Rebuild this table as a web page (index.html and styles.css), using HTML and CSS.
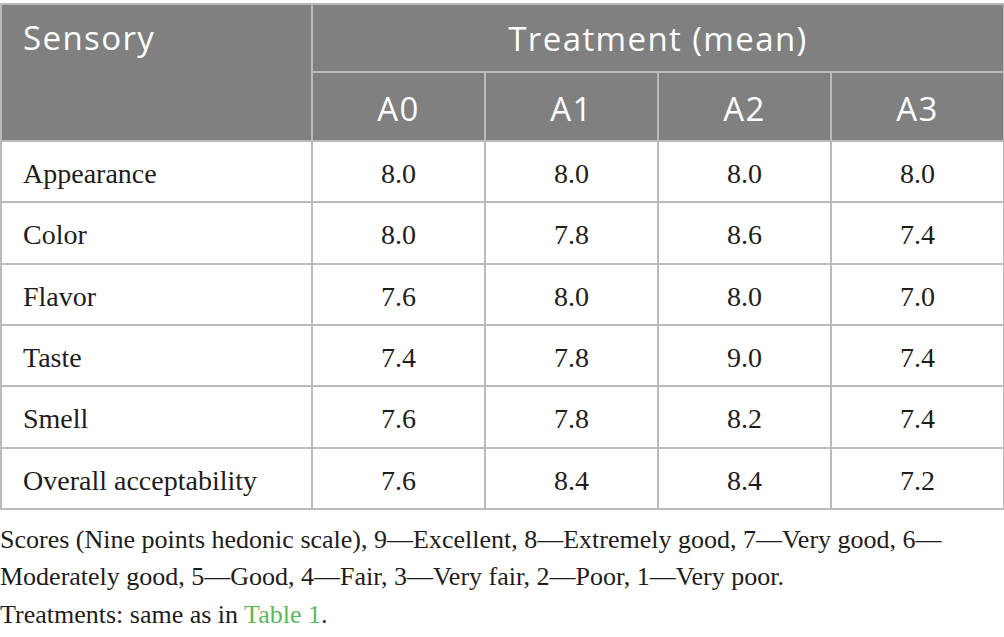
FILE: index.html
```html
<!DOCTYPE html>
<html>
<head>
<meta charset="utf-8">
<link rel="stylesheet" href="styles.css">
</head>
<body>
<div class="wrap">
<table class="data">
  <colgroup>
    <col class="c-first"><col class="c-num"><col class="c-num"><col class="c-num"><col class="c-num">
  </colgroup>
  <thead>
    <tr class="h1">
      <th rowspan="2" class="h-sensory">Sensory</th>
      <th colspan="4" class="h-treat">Treatment (mean)</th>
    </tr>
    <tr class="h2">
      <th>A0</th><th>A1</th><th>A2</th><th>A3</th>
    </tr>
  </thead>
  <tbody>
    <tr><td class="lbl">Appearance</td><td>8.0</td><td>8.0</td><td>8.0</td><td>8.0</td></tr>
    <tr><td class="lbl">Color</td><td>8.0</td><td>7.8</td><td>8.6</td><td>7.4</td></tr>
    <tr><td class="lbl">Flavor</td><td>7.6</td><td>8.0</td><td>8.0</td><td>7.0</td></tr>
    <tr><td class="lbl">Taste</td><td>7.4</td><td>7.8</td><td>9.0</td><td>7.4</td></tr>
    <tr><td class="lbl">Smell</td><td>7.6</td><td>7.8</td><td>8.2</td><td>7.4</td></tr>
    <tr><td class="lbl">Overall acceptability</td><td>7.6</td><td>8.4</td><td>8.4</td><td>7.2</td></tr>
  </tbody>
</table>
<div class="notes">
  <p>Scores (Nine points hedonic scale), 9—Excellent, 8—Extremely good, 7—Very good, 6—Moderately good, 5—Good, 4—Fair, 3—Very fair, 2—Poor, 1—Very poor.</p>
  <p>Treatments: same as in <a class="ref" href="#">Table 1</a>.</p>
</div>
</div>
</body>
</html>
```
FILE: styles.css
```css
html, body {
  margin: 0;
  padding: 0;
  background: #ffffff;
}
.wrap {
  padding-top: 3px;
  width: 1004px;
}
.data {
  width: 1003px;
  border-collapse: collapse;
  table-layout: fixed;
}
.c-first { width: 311px; }
.c-num { width: 173px; }
.data th, .data td {
  border: 2px solid #bababa;
}
.data thead th {
  background: #808080;
  color: #ffffff;
  font-family: "Open Sans", "Lato", sans-serif;
  font-weight: 400;
  font-size: 33px;
  letter-spacing: 1.4px;
  padding: 0;
}
.h1 { height: 68px; }
.h2 { height: 69px; }
.h-sensory {
  text-align: left;
  vertical-align: top;
  padding: 10px 0 0 21px !important;
}
.h-treat { text-align: center; }
.h2 th { text-align: center; padding-top: 4px !important; }
.data td {
  font-family: "Liberation Serif", "Times New Roman", serif;
  font-size: 28px;
  color: #1f1c1c;
  text-align: center;
  height: 54.33px;
  padding: 5px 0 0 0;
}
.data td.lbl {
  text-align: left;
  padding-left: 21px;
}
.notes {
  font-family: "Liberation Serif", "Times New Roman", serif;
  font-size: 26px;
  line-height: 37.5px;
  color: #1f1c1c;
  padding-top: 11px;
}
.notes p { margin: 0; }
.ref {
  color: #5cb85c;
  text-decoration: none;
}
```
